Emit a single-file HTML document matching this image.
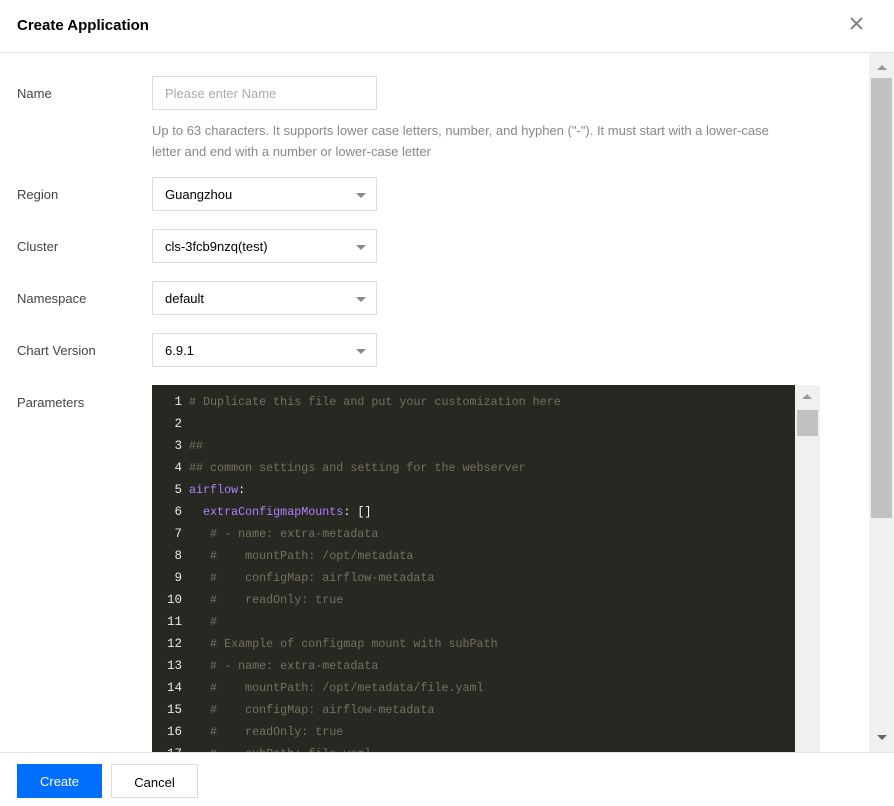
<!DOCTYPE html>
<html><head><meta charset="utf-8"><style>
*{box-sizing:border-box;margin:0;padding:0}
body{width:894px;height:806px;overflow:hidden;background:#fff;font-family:"Liberation Sans",sans-serif;font-size:13px;color:#000;position:relative}
.abs{position:absolute}
.hdr{left:0;top:0;width:894px;height:53px;border-bottom:1px solid #e2e2e2}
.title{left:17px;top:17px;font-size:15px;font-weight:bold;color:#000}
.lbl{left:17px;color:#444;font-size:13px}
.inp{left:152px;width:225px;height:34px;border:1px solid #dcdcdc;padding-left:12px;line-height:33px;color:#000}
.arr{position:absolute;right:10px;top:15px;width:0;height:0;border-left:5px solid transparent;border-right:5px solid transparent;border-top:5px solid #888}
.help{left:152px;top:120px;width:642px;color:#888;line-height:21px;font-size:13px}
.ed{left:152px;top:385px;width:643px;height:367px;background:#272822;overflow:hidden;font-family:"Liberation Mono",monospace;font-size:11.7px}
.ln{position:absolute;left:0;width:30px;text-align:right;color:#e8e8e8;font-size:12.5px;margin-top:1px}
.cd{position:absolute;left:37px;white-space:pre;color:#75715e}
.k{color:#ae81ff}.w{color:#f8f8f2}
.esb{left:795px;top:385px;width:25px;height:367px;background:#f0f0f0}
.psb{left:869px;top:53px;width:25px;height:699px;background:#f0f0f0}
.up{width:0;height:0;border-left:5px solid transparent;border-right:5px solid transparent;border-bottom:5px solid #999}
.dn{width:0;height:0;border-left:5px solid transparent;border-right:5px solid transparent;border-top:5px solid #666}
.ftr{left:0;top:752px;width:894px;height:1px;background:#e2e2e2}
.btn{top:764px;height:34px;line-height:35px;text-align:center;font-size:13px}
</style></head><body>
<div class="abs hdr"></div>
<div class="abs title">Create Application</div>
<svg class="abs" style="left:850px;top:17px" width="13" height="13"><path d="M1 1L12 12M12 1L1 12" stroke="#777" stroke-width="1.8"/></svg>

<div class="abs lbl" style="top:86px">Name</div>
<div class="abs inp" style="top:76px;color:#aaa">Please enter Name</div>
<div class="abs help">Up to 63 characters. It supports lower case letters, number, and hyphen ("-"). It must start with a lower-case letter and end with a number or lower-case letter</div>

<div class="abs lbl" style="top:187px">Region</div>
<div class="abs inp" style="top:177px">Guangzhou<i class="arr"></i></div>
<div class="abs lbl" style="top:239px">Cluster</div>
<div class="abs inp" style="top:229px">cls-3fcb9nzq(test)<i class="arr"></i></div>
<div class="abs lbl" style="top:291px">Namespace</div>
<div class="abs inp" style="top:281px">default<i class="arr"></i></div>
<div class="abs lbl" style="top:343px">Chart Version</div>
<div class="abs inp" style="top:333px">6.9.1<i class="arr"></i></div>
<div class="abs lbl" style="top:395px">Parameters</div>

<div class="abs ed">
<div class="ln" style="top:9px">1</div><div class="cd" style="top:10px"># Duplicate this file and put your customization here</div>
<div class="ln" style="top:31px">2</div>
<div class="ln" style="top:53px">3</div><div class="cd" style="top:54px">##</div>
<div class="ln" style="top:75px">4</div><div class="cd" style="top:76px">## common settings and setting for the webserver</div>
<div class="ln" style="top:97px">5</div><div class="cd" style="top:98px"><span class="k">airflow</span><span class="w">:</span></div>
<div class="ln" style="top:119px">6</div><div class="cd" style="top:120px">  <span class="k">extraConfigmapMounts</span><span class="w">: []</span></div>
<div class="ln" style="top:141px">7</div><div class="cd" style="top:142px">   # - name: extra-metadata</div>
<div class="ln" style="top:163px">8</div><div class="cd" style="top:164px">   #    mountPath: /opt/metadata</div>
<div class="ln" style="top:185px">9</div><div class="cd" style="top:186px">   #    configMap: airflow-metadata</div>
<div class="ln" style="top:207px">10</div><div class="cd" style="top:208px">   #    readOnly: true</div>
<div class="ln" style="top:229px">11</div><div class="cd" style="top:230px">   #</div>
<div class="ln" style="top:251px">12</div><div class="cd" style="top:252px">   # Example of configmap mount with subPath</div>
<div class="ln" style="top:273px">13</div><div class="cd" style="top:274px">   # - name: extra-metadata</div>
<div class="ln" style="top:295px">14</div><div class="cd" style="top:296px">   #    mountPath: /opt/metadata/file.yaml</div>
<div class="ln" style="top:317px">15</div><div class="cd" style="top:318px">   #    configMap: airflow-metadata</div>
<div class="ln" style="top:339px">16</div><div class="cd" style="top:340px">   #    readOnly: true</div>
<div class="ln" style="top:361px">17</div><div class="cd" style="top:362px">   #    subPath: file.yaml</div>
</div>
<div class="abs esb"><div class="abs up" style="left:7px;top:9px"></div><div class="abs" style="left:2px;top:25px;width:21px;height:26px;background:#c1c1c1"></div></div>
<div class="abs psb"><div class="abs up" style="left:8px;top:12px"></div><div class="abs" style="left:2px;top:25px;width:21px;height:440px;background:#c1c1c1"></div><div class="abs dn" style="left:8px;top:682px"></div></div>

<div class="abs ftr"></div>
<div class="abs btn" style="left:17px;width:85px;background:#006eff;color:#fff">Create</div>
<div class="abs btn" style="left:111px;width:87px;border:1px solid #dcdcdc;color:#000">Cancel</div>
</body></html>
